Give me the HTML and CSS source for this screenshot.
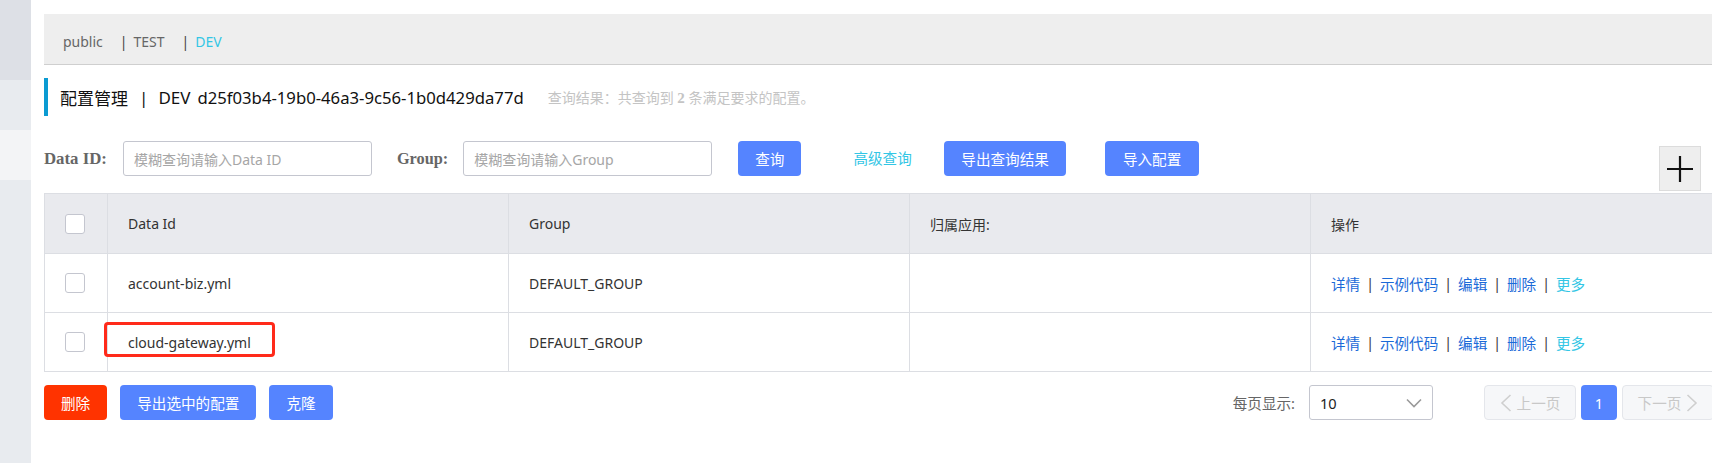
FILE: index.html
```html
<!DOCTYPE html>
<html lang="zh-CN">
<head>
<meta charset="utf-8">
<title>配置管理</title>
<link rel="stylesheet" href="styles.css">
</head>
<body>
<div class="layout">
  <aside class="sidebar">
    <div class="sb sb-a"></div>
    <div class="sb sb-b"></div>
    <div class="sb sb-c"></div>
    <div class="sb sb-d"></div>
  </aside>
  <main class="main">
    <div class="ns-bar">
      <span class="ns">public</span>
      <span class="ns-pipe">|</span><span class="ns">TEST</span>
      <span class="ns-pipe">|</span><span class="ns ns-active">DEV</span>
    </div>

    <div class="title-row">
      <span class="title-main">配置管理</span>
      <span class="title-pipe">|</span>
      <span class="title-ns">DEV</span>
      <span class="title-id">d25f03b4-19b0-46a3-9c56-1b0d429da77d</span>
      <span class="title-result">查询结果：共查询到 <b>2</b> 条满足要求的配置。</span>
    </div>

    <div class="search-row">
      <label class="search-label">Data ID:</label>
      <div class="input"><span class="placeholder">模糊查询请输入Data ID</span></div>
      <label class="search-label search-label-group">Group:</label>
      <div class="input"><span class="placeholder">模糊查询请输入Group</span></div>
      <button class="btn btn-query">查询</button>
      <span class="link-adv">高级查询</span>
      <button class="btn btn-export">导出查询结果</button>
      <button class="btn btn-import">导入配置</button>
      <button class="plus-btn" aria-label="新建">
        <svg width="26" height="26" viewBox="0 0 26 26"><path d="M13 0V26M0 13H26" stroke="#111" stroke-width="2.2" fill="none"/></svg>
      </button>
    </div>

    <div class="grid">
      <div class="cell head cb-cell"><span class="checkbox"></span></div>
      <div class="cell head">Data Id</div>
      <div class="cell head">Group</div>
      <div class="cell head">归属应用:</div>
      <div class="cell head">操作</div>

      <div class="cell cb-cell"><span class="checkbox"></span></div>
      <div class="cell">account-biz.yml</div>
      <div class="cell">DEFAULT_GROUP</div>
      <div class="cell"></div>
      <div class="cell ops">
        <span class="op">详情</span><span class="op-sep">|</span><span class="op">示例代码</span><span class="op-sep">|</span><span class="op">编辑</span><span class="op-sep">|</span><span class="op">删除</span><span class="op-sep">|</span><span class="op op-more">更多</span>
      </div>

      <div class="cell cb-cell"><span class="checkbox"></span></div>
      <div class="cell marked">cloud-gateway.yml<span class="mark-box"></span></div>
      <div class="cell">DEFAULT_GROUP</div>
      <div class="cell"></div>
      <div class="cell ops">
        <span class="op">详情</span><span class="op-sep">|</span><span class="op">示例代码</span><span class="op-sep">|</span><span class="op">编辑</span><span class="op-sep">|</span><span class="op">删除</span><span class="op-sep">|</span><span class="op op-more">更多</span>
      </div>
    </div>

    <div class="footer-row">
      <button class="btn btn-danger">删除</button>
      <button class="btn btn-export-sel">导出选中的配置</button>
      <button class="btn btn-clone">克隆</button>
      <div class="pager">
        <span class="pager-label">每页显示:</span>
        <div class="select">
          <span class="select-val">10</span>
          <svg class="select-arrow" width="16" height="10" viewBox="0 0 16 10"><path d="M1 1.5L8 8.5L15 1.5" stroke="#9a9a9a" stroke-width="1.6" fill="none"/></svg>
        </div>
        <div class="page-btn page-prev">
          <svg width="12" height="18" viewBox="0 0 12 18"><path d="M10.5 1L2 9L10.5 17" stroke="#cfcfcf" stroke-width="1.6" fill="none"/></svg>
          <span>上一页</span>
        </div>
        <div class="page-btn page-cur">1</div>
        <div class="page-btn page-next">
          <span>下一页</span>
          <svg width="12" height="18" viewBox="0 0 12 18"><path d="M1.5 1L10 9L1.5 17" stroke="#cfcfcf" stroke-width="1.6" fill="none"/></svg>
        </div>
      </div>
    </div>
  </main>
</div>
</body>
</html>
```

FILE: styles.css
```css
* { box-sizing: border-box; }

html, body {
  margin: 0;
  padding: 0;
  background: #fff;
  overflow: hidden;
}

body {
  font-family: "Noto Sans", "Noto Sans CJK SC", sans-serif;
  font-size: 14px;
  color: #333;
  width: 1712px;
  height: 463px;
}

.layout {
  display: flex;
  height: 463px;
}

/* sidebar */
.sidebar {
  flex: 0 0 31px;
  display: flex;
  flex-direction: column;
}
.sb-a { height: 80px; background: #dde0e6; }
.sb-b { height: 50px; background: #e8ebef; }
.sb-c { height: 50px; background: #f3f4f6; }
.sb-d { flex: 1; background: #e8ebef; }

/* main */
.main {
  flex: 0 0 auto;
  width: 1683px;
  padding: 14px 0 0 13px;
}

/* namespace bar */
.ns-bar {
  height: 51px;
  background: #eeeeee;
  border-bottom: 1px solid #cfcfcf;
  display: flex;
  align-items: center;
  padding: 5px 0 0 19px;
  font-size: 14px;
  color: #666;
}
.ns { color: #666; margin-right: 17px; }
.ns-pipe { color: #444; margin-right: 6px; }
.ns-active { color: #33c6e5; }

/* title */
.title-row {
  margin-top: 13px;
  height: 38px;
  border-left: 4px solid #0b9bd2;
  padding-left: 12px;
  display: flex;
  align-items: center;
  font-size: 17px;
  color: #111;
}
.title-pipe { margin: 0 10px 0 11px; }
.title-ns { margin-right: 7px; }
.title-id { font-size: 16.7px; }
.title-result {
  margin-left: 24px;
  font-size: 14px;
  color: #c4c4c4;
}
.title-result b { font-family: "Liberation Serif", serif; font-size: 15px; }

/* search row */
.search-row {
  margin-top: 25px;
  display: flex;
  align-items: flex-start;
  height: 50px;
}
.search-label {
  font-family: "Liberation Serif", serif;
  font-weight: bold;
  font-size: 16.8px;
  color: #666;
  line-height: 35px;
  margin-right: 16px;
}
.search-label-group { margin-left: 25px; font-size: 16.3px; margin-right: 15px; }
.input {
  width: 249px;
  height: 35px;
  border: 1px solid #c4c6cf;
  border-radius: 3px;
  display: flex;
  align-items: center;
  padding-left: 10px;
}
.placeholder { color: #a6a6a6; font-size: 14px; }

.btn {
  height: 35px;
  border: none;
  border-radius: 4px;
  background: #5584ff;
  color: #fff;
  font-family: "Noto Sans", "Noto Sans CJK SC", sans-serif;
  font-size: 14.6px;
  padding: 0 17px;
  cursor: pointer;
}
.btn-query { margin-left: 26px; }
.link-adv {
  color: #33c6e5;
  font-size: 14.6px;
  line-height: 35px;
  margin-left: 52px;
}
.btn-export { margin-left: 32px; padding: 0 17.5px; }
.btn-import { margin-left: 39px; padding: 0 17.5px; }

.plus-btn {
  margin-left: auto;
  margin-right: 13px;
  margin-top: 5px;
  width: 42px;
  height: 45px;
  background: #eeeeee;
  border: 1px solid #dcdcdc;
  padding: 0;
  display: flex;
  align-items: center;
  justify-content: center;
}

/* table grid */
.grid {
  margin-top: 2px;
  display: grid;
  grid-template-columns: 63px 401px 401px 401px 1fr;
  grid-template-rows: 60px 59px 59px;
  border-top: 1px solid #dcdee3;
  border-left: 1px solid #dcdee3;
}
.cell {
  display: flex;
  align-items: center;
  padding-left: 20px;
  border-right: 1px solid #dcdee3;
  border-bottom: 1px solid #dcdee3;
  color: #333;
  font-size: 14px;
}
.head { background: #e9eaee; }
.cb-cell { padding-left: 20px; }
.checkbox {
  width: 20px;
  height: 20px;
  border: 1px solid #c4c6cf;
  border-radius: 3px;
  background: #fff;
}
.marked { position: relative; }
.mark-box {
  position: absolute;
  left: -4px;
  top: 9px;
  width: 171px;
  height: 35px;
  border: 3px solid #ff2a1a;
  border-radius: 4px;
}

.ops { font-size: 14.6px; }
.op { color: #1b6ad8; }
.op-sep { color: #333; margin: 0 6px; font-size: 14px; }
.op-more { color: #33c6e5; }

/* footer */
.footer-row {
  margin-top: 13px;
  display: flex;
  align-items: center;
  gap: 13px;
}
.btn-danger { background: #ff3300; }
.pager {
  margin-left: auto;
  margin-right: 0;
  display: flex;
  align-items: center;
}
.pager-label {
  color: #666;
  font-size: 14.6px;
  margin-right: 14px;
}
.select {
  width: 124px;
  height: 35px;
  border: 1px solid #c4c6cf;
  border-radius: 3px;
  display: flex;
  align-items: center;
  padding: 0 10px 0 10px;
  margin-right: 51px;
}
.select-val { color: #222; font-size: 14.6px; }
.select-arrow { margin-left: auto; }

.page-btn {
  height: 35px;
  border-radius: 4px;
  display: flex;
  align-items: center;
  justify-content: center;
  font-size: 14.6px;
}
.page-prev, .page-next {
  width: 92px;
  background: #f6f7f9;
  border: 1px solid #e4e6eb;
  color: #c8c8c8;
  gap: 5px;
}
.page-cur {
  width: 36px;
  margin: 0 5px;
  background: #5584ff;
  color: #fff;
}
```
